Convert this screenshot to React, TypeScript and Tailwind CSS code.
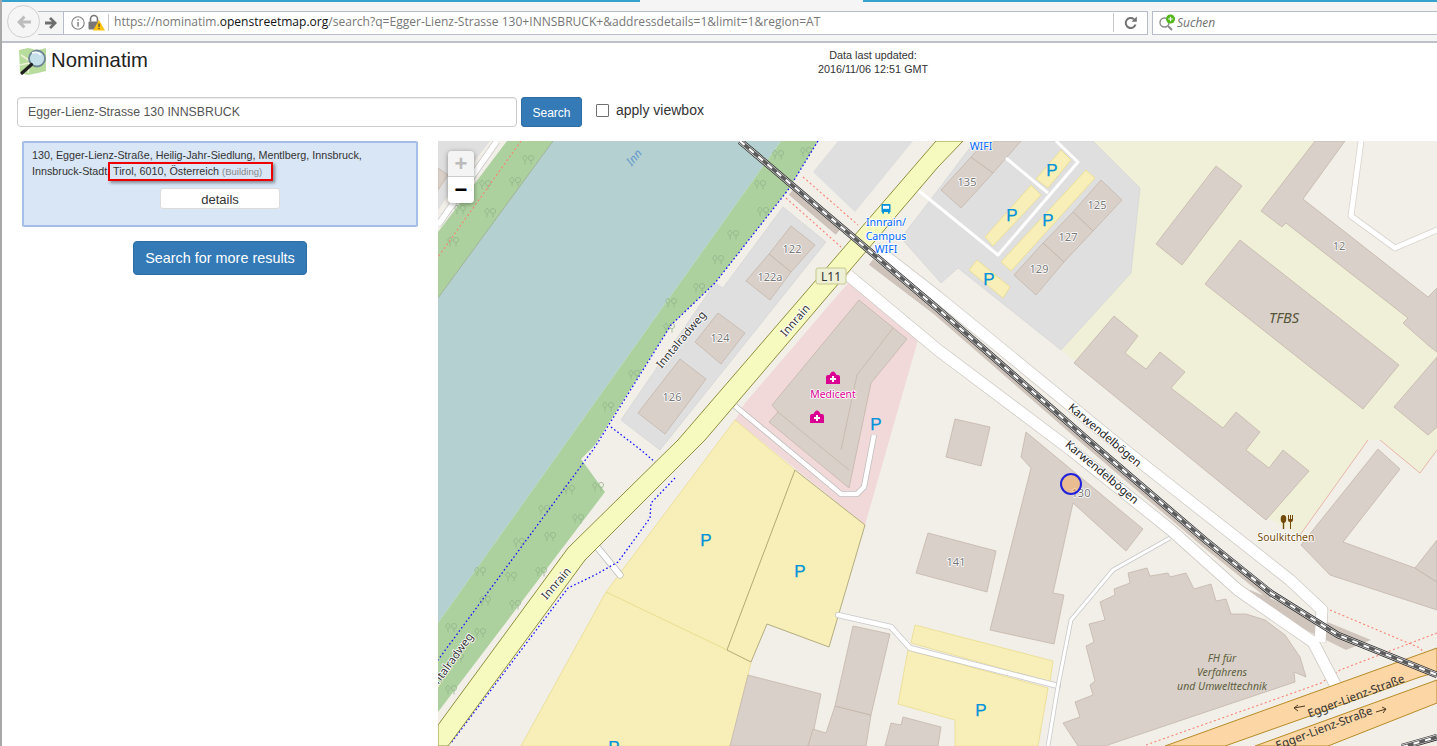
import React from "react"

const sans = "font-['Liberation_Sans',Arial,sans-serif]"

type Poly = string

const buildings: Poly[] = [
  "791,226 815,245 791,272 769,254",
  "769,254 791,272 770,300 746,281",
  "718,313 745,333 721,364 695,342",
  "680,359 706,379 665,434 638,413",
  "859,300 907,339 871,383 849,488 769,422 778,412 772,405",
  "748,675 821,694 814,729 808,746 730,746",
  "813,729 826,733 835,706 871,715 866,746 808,746",
  "853,626 890,634 871,715 835,706",
  "891,723 901,725 903,717 941,727 938,746 885,746",
  "1026,432 1143,529 1126,551 1073,503 1053,593 1064,595 1054,644 990,630 1031,468 1021,457",
  "928,533 996,551 987,592 916,573",
  "955,419 990,427 981,466 946,457",
  "1147,568 1150,576 1168,573 1170,577 1186,573 1194,589 1211,584 1216,601 1226,599 1231,614 1246,614 1265,620 1285,635 1300,657 1306,677 1294,672 1295,682 1105,746 1078,746 1063,723 1080,717 1075,702 1093,695 1090,685 1095,681 1086,646 1094,642 1089,624 1105,620 1100,602 1115,595 1114,589 1130,583 1128,573",
  "971,157 993,173 961,208 941,190",
  "985,141 1021,141 993,173 971,157",
  "1101,180 1122,200 1093,231 1073,212",
  "1073,212 1093,231 1064,262 1043,243",
  "1043,243 1064,262 1036,295 1014,275",
  "1315,141 1345,141 1303,199 1428,297 1437,288 1437,352 1429,346 1403,323 1408,318 1286,223 1282,227 1261,211",
  "1216,166 1242,186 1182,265 1156,244",
  "1240,240 1399,365 1363,409 1205,284",
  "1437,357 1394,407 1428,435 1437,427",
  "1114,316 1138,336 1125,353 1146,369 1160,352 1185,372 1171,388 1223,428 1236,412 1260,432 1246,450 1269,468 1283,450 1309,471 1266,520 1074,363",
  "1378,449 1400,469 1343,542 1415,568 1437,582 1437,610 1330,575 1301,545",
  "1415,568 1437,540 1437,582",
  "438,168 448,175 438,190",
]

const parkings: Poly[] = [
  "1061,150 1071,160 1048,188 1036,179",
  "1031,185 1041,195 993,246 985,237",
  "1086,170 1095,178 1011,271 1001,262",
  "977,260 1010,287 1003,298 969,270",
  "915,625 1053,661 1050,682 911,643",
  "908,650 1048,688 1038,746 955,746 955,720 898,704",
  "735,420 795,470 727,650 606,592",
  "606,592 727,650 751,662 731,746 521,746",
]

const parkingMarks = [
  [706, 540], [800, 571], [981, 710], [614, 747], [876, 424],
  [1052, 170], [1012, 215], [1048, 220], [989, 279],
]

const houseNumbers: [string, number, number][] = [
  ["122", 792, 253], ["122a", 770, 281], ["124", 720, 342], ["126", 672, 401],
  ["135", 967, 186], ["125", 1097, 209], ["127", 1068, 241], ["129", 1039, 273],
  ["12", 1339, 250], ["141", 956, 566], ["130", 1081, 497],
]

const trees = [
  [528, 160], [515, 182], [460, 210], [490, 213], [485, 185], [453, 242],
  [778, 155], [806, 152], [760, 185], [763, 212], [733, 235], [718, 260],
  [699, 288], [671, 303], [669, 328], [634, 375], [608, 407],
  [569, 490], [544, 510], [578, 519], [550, 537], [519, 543], [511, 577],
  [485, 601], [515, 605], [451, 628], [480, 633], [458, 658], [451, 690],
  [541, 572], [598, 487], [480, 572],
]

function Tree({ x, y }: { x: number; y: number }) {
  return (
    <g transform={`translate(${x} ${y})`} fill="none" stroke="#94b58c" strokeWidth="0.8">
      <path d="M-3 1.5 L-5.5 -2 L-3 -5 L-0.8 -2 Z M-3 1.5 V4.5" />
      <circle cx="3" cy="-2" r="2.6" />
      <path d="M3 0.6 V4.5" />
    </g>
  )
}

function MedBag({ x, y }: { x: number; y: number }) {
  return (
    <g transform={`translate(${x} ${y})`}>
      <path d="M-7 6 V-1 Q-7 -3 -5 -3 H-3.5 Q-2 -6.5 0 -6.5 Q2 -6.5 3.5 -3 H5 Q7 -3 7 -1 V6 Z" fill="#da0092" />
      <path d="M-1 -2 H1 V0 H3 V2 H1 V4 H-1 V2 H-3 V0 H-1 Z" fill="#fff" />
    </g>
  )
}

function Rail({ d }: { d: string }) {
  return (
    <g fill="none">
      <path d={d} stroke="#2b2b2b" strokeWidth="6.5" />
      <path d={d} stroke="#e4e4e4" strokeWidth="5" />
      <path d={d} stroke="#5c5c5c" strokeWidth="3.8" />
      <path d={d} stroke="#fff" strokeWidth="2" strokeDasharray="6 6" />
    </g>
  )
}

function OsmMap() {
  const rail = "M740,141 L938,309 L1088,440 L1205,540 L1271,593 L1338,635 L1437,675"
  const upperRoad = "M875,248 L938,297 L1125,450 L1290,580 L1322,610 L1320,642"
  const lowerRoad = "M848,275 L938,350 L1071,450 L1171,530 L1238,590 L1313,642 L1338,690"
  const labelFont = "'Noto Sans',sans-serif"

  return (
    <svg width="999" height="605" viewBox="438 141 999 605" className="block" fontFamily={labelFont}>
      <rect x="438" y="141" width="999" height="605" fill="#f2efe9" />

      {/* landuse */}
      <polygon points="1093,141 1437,141 1437,450 1420,473 1380,440 1368,440 1300,535 1271,520 1061,350 1131,273 1140,188" fill="#f0f0d8" />
      <path d="M1437,450 L1420,473 L1380,440 M1368,440 L1300,535" fill="none" stroke="#e3a79b" strokeWidth="0.8" />
      <polygon points="1345,141 1437,141 1437,288 1428,297 1303,199" fill="#f2efe9" />
      <polygon points="975,141 1093,141 1140,188 1131,273 1061,350 958,268 941,283 901,238 938,190" fill="#dfdfdf" stroke="#d2d2d2" strokeWidth="0.6" />
      <polygon points="838,141 913,141 855,212 813,172" fill="#dfdfdf" />
      <polygon points="783,207 826,242 660,450 621,420 715,283 723,288" fill="#dfdfdf" stroke="#d2d2d2" strokeWidth="0.6" />
      <polygon points="438,141 490,141 445,200 438,210" fill="#dfdfdf" />
      <polygon points="848,283 918,340 865,525 735,420 745,403" fill="#f1d9d9" />

      {/* water and meadows */}
      <polygon points="553,141 781,141 438,623 438,298" fill="#b5d0d0" />
      <polygon points="507,141 553,141 438,298 438,232" fill="#add19e" />
      <polygon points="781,141 818,141 788,190 715,283 671,325 595,445 581,459 605,492 438,712 438,623" fill="#add19e" />
      <path d="M553,141 L438,298" stroke="#8fa58a" strokeWidth="0.7" />
      {trees.map(([x, y], i) => <Tree key={i} x={x} y={y} />)}

      {/* parking */}
      {parkings.map((p, i) => (
        <polygon key={i} points={p} fill="#f7efb7" stroke="#eadc8e" strokeWidth="0.8" />
      ))}
      <polygon points="795,470 865,525 829,647 767,624 751,662 727,650" fill="#f7efb7" stroke="#a39b69" strokeWidth="0.8" />

      {/* buildings */}
      {buildings.map((p, i) => (
        <polygon key={i} points={p} fill="#d9d0c9" stroke="#c4b6ab" strokeWidth="0.8" />
      ))}
      <path d="M893,328 L857,375 L841,450 M778,412 L849,470" fill="none" stroke="#c4b6ab" strokeWidth="0.8" />

      {/* footways */}
      <g fill="none" stroke="#fa8072" strokeWidth="1.1" strokeDasharray="2 2.5">
        <path d="M521,141 L438,257" />
        <path d="M803,177 L858,225" />
        <path d="M786,198 L841,247" />
        <path d="M1330,610 L1418,647 L1428,655" />
        <path d="M1146,745 L1321,683 L1328,678 L1340,670 L1437,633" />
      </g>

      {/* minor roads */}
      <g fill="none" strokeLinejoin="round">
        <path d="M497,141 L438,225" stroke="#c8c8c8" strokeWidth="7" />
        <path d="M497,141 L438,225" stroke="#fff" strokeWidth="5.5" />
        <path d="M918,190 L998,255 L1078,162 L1056,141 M1006,158 L1048,193" stroke="#fff" strokeWidth="3" />
        <path d="M1361,141 L1351,216 L1395,248 L1437,230" stroke="#d8d2cb" strokeWidth="6.5" />
        <path d="M1361,141 L1351,216 L1395,248 L1437,230" stroke="#fff" strokeWidth="5" />
        <path d="M735,406 L841,494 H857 L864,487 L874,435" stroke="#bcbcbc" strokeWidth="6" />
        <path d="M735,406 L841,494 H857 L864,487 L874,435" stroke="#fff" strokeWidth="4.5" />
        <path d="M838,615 L891,627 L910,648 L1058,686" stroke="#c8c8c8" strokeWidth="6" strokeLinecap="round" />
        <path d="M838,615 L891,627 L910,648 L1058,686" stroke="#fff" strokeWidth="4.5" strokeLinecap="round" />
        <path d="M1048,746 L1058,686 L1071,620 L1113,570 L1170,538" stroke="#c8c8c8" strokeWidth="4.5" />
        <path d="M1048,746 L1058,686 L1071,620 L1113,570 L1170,538" stroke="#fff" strokeWidth="3" />
        <path d="M598,548 L620,575" stroke="#bcbcbc" strokeWidth="7" strokeLinecap="round" />
        <path d="M598,548 L620,575" stroke="#fff" strokeWidth="5.5" strokeLinecap="round" />
      </g>

      {/* blue cycleways */}
      <g fill="none" stroke="#1414ff" strokeWidth="1.3" strokeDasharray="1.6 2.4">
        <path d="M818,141 L788,190 L715,283 L671,325 L595,447 L438,660" />
        <path d="M611,427 L641,450 L655,462" />
        <path d="M675,478 L651,503 L650,518 L618,562 L595,575 L568,588 L451,743" />
      </g>

      {/* Karwendelbögen */}
      <g fill="none" strokeLinejoin="round">
        <path d={lowerRoad} stroke="#cfcac4" strokeWidth="12.5" />
        <path d={upperRoad} stroke="#cfcac4" strokeWidth="12.5" />
        <polygon points="1250,590 1371,640 1346,650 1240,597" fill="#cfc5bc" stroke="none" />
        <path d="M791,192 L838,232 M871,262 L938,313 L1088,444 L1205,544 L1271,597" stroke="#cdc3ba" strokeWidth="7" />
        <path d={lowerRoad} stroke="#fff" strokeWidth="11" />
        <path d={upperRoad} stroke="#fff" strokeWidth="11" />
      </g>

      {/* Innrain */}
      <polygon points="936,141 963,141 938,167 705,440 585,560 448,746 438,746 438,725 568,548 678,440" fill="#f7fabf" stroke="#8f8f3d" strokeWidth="1" />

      {/* Egger-Lienz-Straße */}
      <polygon points="1165,746 1437,648 1437,672 1420,677 1225,746" fill="#fcd6a4" stroke="#b78a26" strokeWidth="1" />
      <polygon points="1255,746 1437,680 1437,703 1328,746" fill="#fcd6a4" stroke="#b78a26" strokeWidth="1" />

      <Rail d={rail} />
      <Rail d="M1402,747 L1437,737" />

      {/* icons */}
      {parkingMarks.map(([x, y], i) => (
        <text key={i} x={x} y={y + 6} textAnchor="middle" fontSize="17" fill="#0092da" stroke="#0092da" strokeWidth="0.25" fontFamily="'Liberation Sans',sans-serif">P</text>
      ))}
      <MedBag x={833} y={378} />
      <MedBag x={817} y={417} />
      <g transform="translate(886 209)">
        <path d="M-4 -5 H4 Q4.5 -5 4.5 -4 V3 H-4.5 V-4 Q-4.5 -5 -4 -5 Z" fill="#0092da" />
        <rect x="-3" y="-3.2" width="6" height="3" fill="#fff" />
        <rect x="-3.8" y="3" width="1.8" height="1.6" fill="#0092da" />
        <rect x="2" y="3" width="1.8" height="1.6" fill="#0092da" />
      </g>
      <g transform="translate(1287 522)" fill="#734a08">
        <ellipse cx="-3.5" cy="-3" rx="2.8" ry="4" />
        <rect x="-4.2" y="0" width="1.4" height="7" />
        <path d="M1 -7 H2 V-3 H3 V-7 H4 V-3 H5 V-7 H6 V-2 Q6 0 4 0 V7 H3 V0 Q1 0 1 -2 Z" />
      </g>

      {/* labels */}
      <g paintOrder="stroke" stroke="#fff" strokeWidth="1.6" strokeLinejoin="round">
        {houseNumbers.map(([t, x, y]) => (
          <text key={t} x={x} y={y} textAnchor="middle" fontSize="11" fill="#777">{t}</text>
        ))}
        <text transform="translate(637 160) rotate(-50)" textAnchor="middle" fontSize="11.5" fontStyle="italic" fill="#6699cc" stroke="none">Inn</text>
        <g fontSize="11.2" fill="#333">
          <text transform="translate(684 342) rotate(-50)" textAnchor="middle">Inntalradweg</text>
          <text transform="translate(453 665) rotate(-54)" textAnchor="middle">Inntalradweg</text>
          <text transform="translate(798 323) rotate(-49)" textAnchor="middle">Innrain</text>
          <text transform="translate(559 586) rotate(-49)" textAnchor="middle">Innrain</text>
        </g>
        <g fontSize="11.4" fill="#222">
          <text transform="translate(1105 435) rotate(40) translate(0 4)" textAnchor="middle">Karwendelbögen</text>
          <text transform="translate(1102 472) rotate(40) translate(0 4)" textAnchor="middle">Karwendelbögen</text>
        </g>
        <g fontSize="11.5" fill="#333" stroke="none">
          <text transform="translate(1356 696) rotate(-20.5) translate(0 4)" textAnchor="middle">Egger-Lienz-Straße</text>
          <text transform="translate(1324 728) rotate(-20.5) translate(0 4)" textAnchor="middle">Egger-Lienz-Straße</text>
        </g>
        <g fontSize="10.6" fill="#0066ff" textAnchor="middle">
          <text x="886" y="225.5">Innrain/</text>
          <text x="886" y="239.5">Campus</text>
          <text x="886" y="253">WIFI</text>
          <text x="981" y="150">WIFI</text>
        </g>
        <text x="833" y="398" textAnchor="middle" fontSize="10.4" fill="#da0092">Medicent</text>
        <text x="1286" y="541" textAnchor="middle" fontSize="10.4" fill="#734a08">Soulkitchen</text>
        <text x="1284" y="323" textAnchor="middle" fontSize="14.5" fontStyle="italic" fill="#55553a" stroke="none">TFBS</text>
        <g fontSize="10.5" fontStyle="italic" fill="#60603f" textAnchor="middle" stroke="none">
          <text x="1222" y="662">FH für</text>
          <text x="1222" y="676">Verfahrens</text>
          <text x="1222" y="690">und Umwelttechnik</text>
        </g>
      </g>
      <path d="M1294,708 L1305,706 M1294,708 L1298,705 M1294,708 L1298,711" fill="none" stroke="#4a3a20" strokeWidth="1" />
      <path d="M1376,712 L1386,709 M1386,709 L1382,707 M1386,709 L1383,713" fill="none" stroke="#4a3a20" strokeWidth="1" />
      <rect x="816" y="268" width="30" height="16" rx="2" fill="#eef0d5" stroke="#c6c78e" />
      <text x="831" y="280.5" textAnchor="middle" fontSize="12" fill="#333">L11</text>

      {/* result marker */}
      <circle cx="1071" cy="484" r="10" fill="#ffa54d" fillOpacity="0.45" stroke="#2222dd" strokeWidth="2" />
    </svg>
  )
}

function Logo() {
  return (
    <svg width="30" height="30" viewBox="0 0 30 30" className="shrink-0">
      <path d="M1 3 L10 1 L20 3 L28 1 L28 24 L20 26 L10 28 L2 26 Z" fill="#b7dc9c" />
      <path d="M3 8 L12 14 L10 26 M16 2 L22 14 L27 16 M2 18 L11 16" fill="none" stroke="#eef2d8" strokeWidth="1.6" />
      <circle cx="19" cy="11.5" r="8" fill="#c6e0ea" stroke="#6d8591" strokeWidth="1.8" />
      <path d="M14 6 Q19 4 23 8" fill="none" stroke="#fff" strokeWidth="1.5" />
      <path d="M13.5 17.5 L4 26" stroke="#1f1f1f" strokeWidth="3.2" strokeLinecap="round" />
    </svg>
  )
}

function BrowserBar() {
  return (
    <div className="relative h-[43px] shrink-0 border-b-[2px] border-[#bcc0c8] bg-[#f5f5f5]">
      {/* tab strip remains */}
      <div className="flex h-[2px]">
        <div className="w-[638px] bg-[#35a3cc]" />
        <div className="w-[223px]" />
        <div className="flex-1 bg-[#35a3cc]" />
      </div>
      <div className="flex h-[39px] items-center pt-[2px]">
        <div className="ml-[36px] flex h-[24px] w-[26px] items-center justify-center border border-l-0 border-[#b6bcc8] bg-[#f5f5f5]">
          <svg width="14" height="14" viewBox="0 0 14 14">
            <path d="M7 1 L13 7 L7 13 L5 11 L8 8.5 H1 V5.5 H8 L5 3 Z" fill="#6e6e6e" />
          </svg>
        </div>
        <div className="flex h-[24px] w-[1084px] items-center border border-l-0 border-[#b6bcc8] bg-white">
          <svg width="18" height="18" viewBox="0 0 18 18" className="ml-[5px]">
            <circle cx="9" cy="9" r="6.2" fill="none" stroke="#808080" strokeWidth="1.1" />
            <rect x="8.3" y="8" width="1.5" height="4.5" fill="#808080" />
            <rect x="8.3" y="5.2" width="1.5" height="1.5" fill="#808080" />
          </svg>
          <svg width="18" height="18" viewBox="0 0 18 18">
            <path d="M3.5 7.5 V5 a3.5 3.5 0 0 1 7 0 V7.5" fill="none" stroke="#777" strokeWidth="1.6" />
            <rect x="1.5" y="7.5" width="11" height="8" rx="1" fill="#777" />
            <path d="M12 6 L18 16.5 H6 Z" fill="#ffc20e" />
            <rect x="11.5" y="9.5" width="1.1" height="3.6" fill="#333" />
            <rect x="11.5" y="14" width="1.1" height="1.2" fill="#333" />
          </svg>
          <div className="ml-[3px] mr-[5px] h-[17px] w-px bg-[#c9c9c9]" />
          <div className="flex-1 truncate font-['Open_Sans',sans-serif] text-[12.05px] text-[#777]">
            https://nominatim.<span className="text-[#111]">openstreetmap.org</span>/search?q=Egger-Lienz-Strasse 130+INNSBRUCK+&addressdetails=1&limit=1&region=AT
          </div>
          <div className="h-[19px] w-px bg-[#c9c9c9]" />
          <div className="flex w-[33px] items-center justify-center">
            <svg width="14" height="14" viewBox="0 0 14 14">
              <path d="M11.5 8.5 A5 5 0 1 1 10 3.2" fill="none" stroke="#727272" strokeWidth="2" />
              <path d="M7.5 5.8 H12.8 V0.6 Z" fill="#727272" />
            </svg>
          </div>
        </div>
        <div className="ml-[4px] flex h-[24px] flex-1 items-center border border-r-0 border-[#b6bcc8] bg-white">
          <svg width="18" height="18" viewBox="0 0 18 18" className="ml-[5px] shrink-0">
            <circle cx="6.5" cy="8.5" r="4.5" fill="none" stroke="#8a8a8a" strokeWidth="1.4" />
            <path d="M10 12 L14 16" stroke="#8a8a8a" strokeWidth="2" />
            <circle cx="12.5" cy="5" r="4.5" fill="#53b61a" />
            <path d="M10.2 5 H14.8 M12.5 2.7 V7.3" stroke="#fff" strokeWidth="1.2" />
          </svg>
          <span className="ml-[1px] font-['Open_Sans',sans-serif] text-[12px] italic text-[#6f6f6f]">Suchen</span>
        </div>
      </div>
      {/* back button sits over the toolbar */}
      <div className="absolute left-[5px] top-[5px] flex h-[33px] w-[33px] items-center justify-center rounded-full border border-[#cfcfcf] bg-[#f5f5f5]">
        <svg width="16" height="14" viewBox="0 0 16 14">
          <path d="M7.5 0.5 L1 7 L7.5 13.5 L9.5 11.3 L6.8 8.6 H15 V5.4 H6.8 L9.5 2.7 Z" fill="#bdbdbd" />
        </svg>
      </div>
    </div>
  )
}

export default function App() {
  return (
    <div className={`flex h-[746px] w-[1437px] flex-col overflow-hidden border-l-[2px] border-[#a9a9a9] bg-white ${sans}`}>
      <BrowserBar />

      {/* Header */}
      <div className="relative flex h-[54px] shrink-0 items-start pl-[16px] pt-[4px]">
        <Logo />
        <h1 className="ml-[3px] text-[20.3px] font-normal leading-[26px] text-[#222]">Nominatim</h1>
        <div className="absolute left-[773px] top-[5px] w-[196px] text-center text-[10.8px] leading-[14px] text-[#333]">
          <div>Data last updated:</div>
          <div>2016/11/06 12:51 GMT</div>
        </div>
      </div>

      {/* Search form */}
      <div className="flex h-[30px] shrink-0 items-stretch pl-[15px]">
        <div className="flex w-[500px] items-center rounded-[4px] border border-[#ccc] pl-[10px] pt-px text-[12.3px] text-[#555] shadow-[inset_0_1px_1px_rgba(0,0,0,0.075)]">
          Egger-Lienz-Strasse 130 INNSBRUCK
        </div>
        <button className="ml-[4px] w-[61px] rounded-[3px] border border-[#2e6da4] bg-[#337ab7] pt-px text-[12px] text-white">Search</button>
        <div className="ml-[14px] flex items-center pb-[4px]">
          <div className="h-[13px] w-[13px] rounded-[1px] border border-[#707070] bg-white" />
          <span className="ml-[7px] text-[14px] leading-none text-[#333]">apply viewbox</span>
        </div>
      </div>

      {/* Results + map */}
      <div className="mt-[14px] flex min-h-0 flex-1">
        <div className="w-[436px] shrink-0">
          <div className="relative ml-[20px] h-[86px] w-[396px] rounded-[2px] border-[2px] border-[#a3bfe8] bg-[#d9e6f6] px-[8px] pt-[4px]">
            <div className="text-[10.75px] leading-[16px] text-[#333]">
              130, Egger-Lienz-Straße, Heilig-Jahr-Siedlung, Mentlberg, Innsbruck,
              <br />
              Innsbruck-Stadt, Tirol, 6010, Österreich <span className="text-[9.5px] text-[#888]">(Building)</span>
            </div>
            <div className="mx-auto mt-[8px] flex h-[21px] w-[120px] items-center justify-center rounded-[3px] border border-[#dcdcdc] bg-white pt-[2px] text-[13px] text-[#333]">details</div>
            {/* red annotation box drawn on the screenshot */}
            <div className="absolute left-[84px] top-[19px] h-[19px] w-[165px] border-[2px] border-[#ee0000] shadow-[2px_2px_3px_rgba(0,0,0,0.4)]" />
          </div>
          <div className="mt-[14px] flex justify-center">
            <button className="h-[34px] w-[174px] rounded-[4px] border border-[#2e6da4] bg-[#337ab7] pt-[2px] text-[14.4px] text-white">Search for more results</button>
          </div>
        </div>

        <div className="relative flex-1 overflow-hidden">
          <OsmMap />
          <div className="absolute left-[10px] top-[10px] w-[26px] overflow-hidden rounded-[4px] shadow-[0_1px_5px_rgba(0,0,0,0.4)]">
            <div className="flex h-[26px] items-center justify-center border-b border-[#ccc] bg-[#f4f4f4] text-[22px] font-bold leading-none text-[#bbb]">+</div>
            <div className="flex h-[26px] items-center justify-center bg-white text-[22px] font-bold leading-none text-black">−</div>
          </div>
        </div>
      </div>
    </div>
  )
}
